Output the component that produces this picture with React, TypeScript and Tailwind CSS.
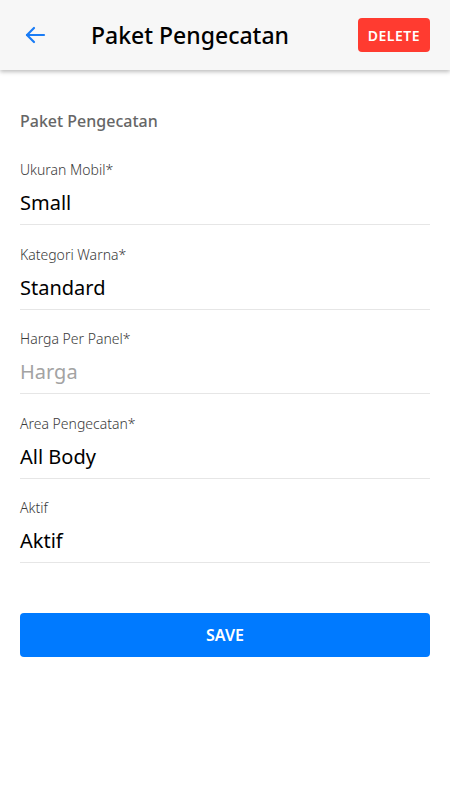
import React from 'react';

interface FieldProps {
  label: string;
  value: string;
  placeholder?: boolean;
}

const Field: React.FC<FieldProps> = ({ label, value, placeholder }) => {
  return (
    <div className="flex flex-col border-b border-[#e6e6e6] pb-[7px] mb-[19.5px]">
      <div className="text-[14px] leading-[20px] text-[#3a3a3a] font-light">{label}</div>
      <div className={`mt-[9px] text-[20px] leading-[28px] ${placeholder ? 'text-[#a3a3a3]' : 'text-black'}`}>{value}</div>
    </div>
  );
};

export default function App() {
  return (
    <div className="w-[450px] h-[800px] bg-white" style={{ fontFamily: '"Segoe UI", "Noto Sans", sans-serif' }}>
      {/* Header */}
      <div className="h-[70px] bg-[#f7f7f7] flex items-center px-[20px] shadow-[0_2px_4px_rgba(0,0,0,0.25)] relative">
        <button className="w-[30px] h-[30px] flex items-center justify-center">
          <svg width="24" height="24" viewBox="0 0 24 24" fill="none" stroke="#1a7cf5" strokeWidth="2.2" strokeLinecap="round" strokeLinejoin="round">
            <path d="M21 12H4" />
            <path d="M11 5l-7 7 7 7" />
          </svg>
        </button>
        <div className="ml-[41px] text-[23px] leading-[32px] text-black font-medium">Paket Pengecatan</div>
        <button className="ml-auto h-[34px] px-[10px] rounded-[4px] bg-[#ff3b30] text-white text-[14px] font-semibold tracking-[0.5px]">
          DELETE
        </button>
      </div>

      {/* Form */}
      <div className="px-[20px] pt-[39px] flex flex-col">
        <div className="text-[16px] leading-[24px] font-medium text-[#666666] mb-[27px]">Paket Pengecatan</div>
        <Field label="Ukuran Mobil*" value="Small" />
        <Field label="Kategori Warna*" value="Standard" />
        <Field label="Harga Per Panel*" value="Harga" placeholder />
        <Field label="Area Pengecatan*" value="All Body" />
        <Field label="Aktif" value="Aktif" />

        <button className="mt-[30px] h-[44px] w-full rounded-[4px] bg-[#007aff] text-white text-[16px] font-semibold">
          SAVE
        </button>
      </div>
    </div>
  );
}
